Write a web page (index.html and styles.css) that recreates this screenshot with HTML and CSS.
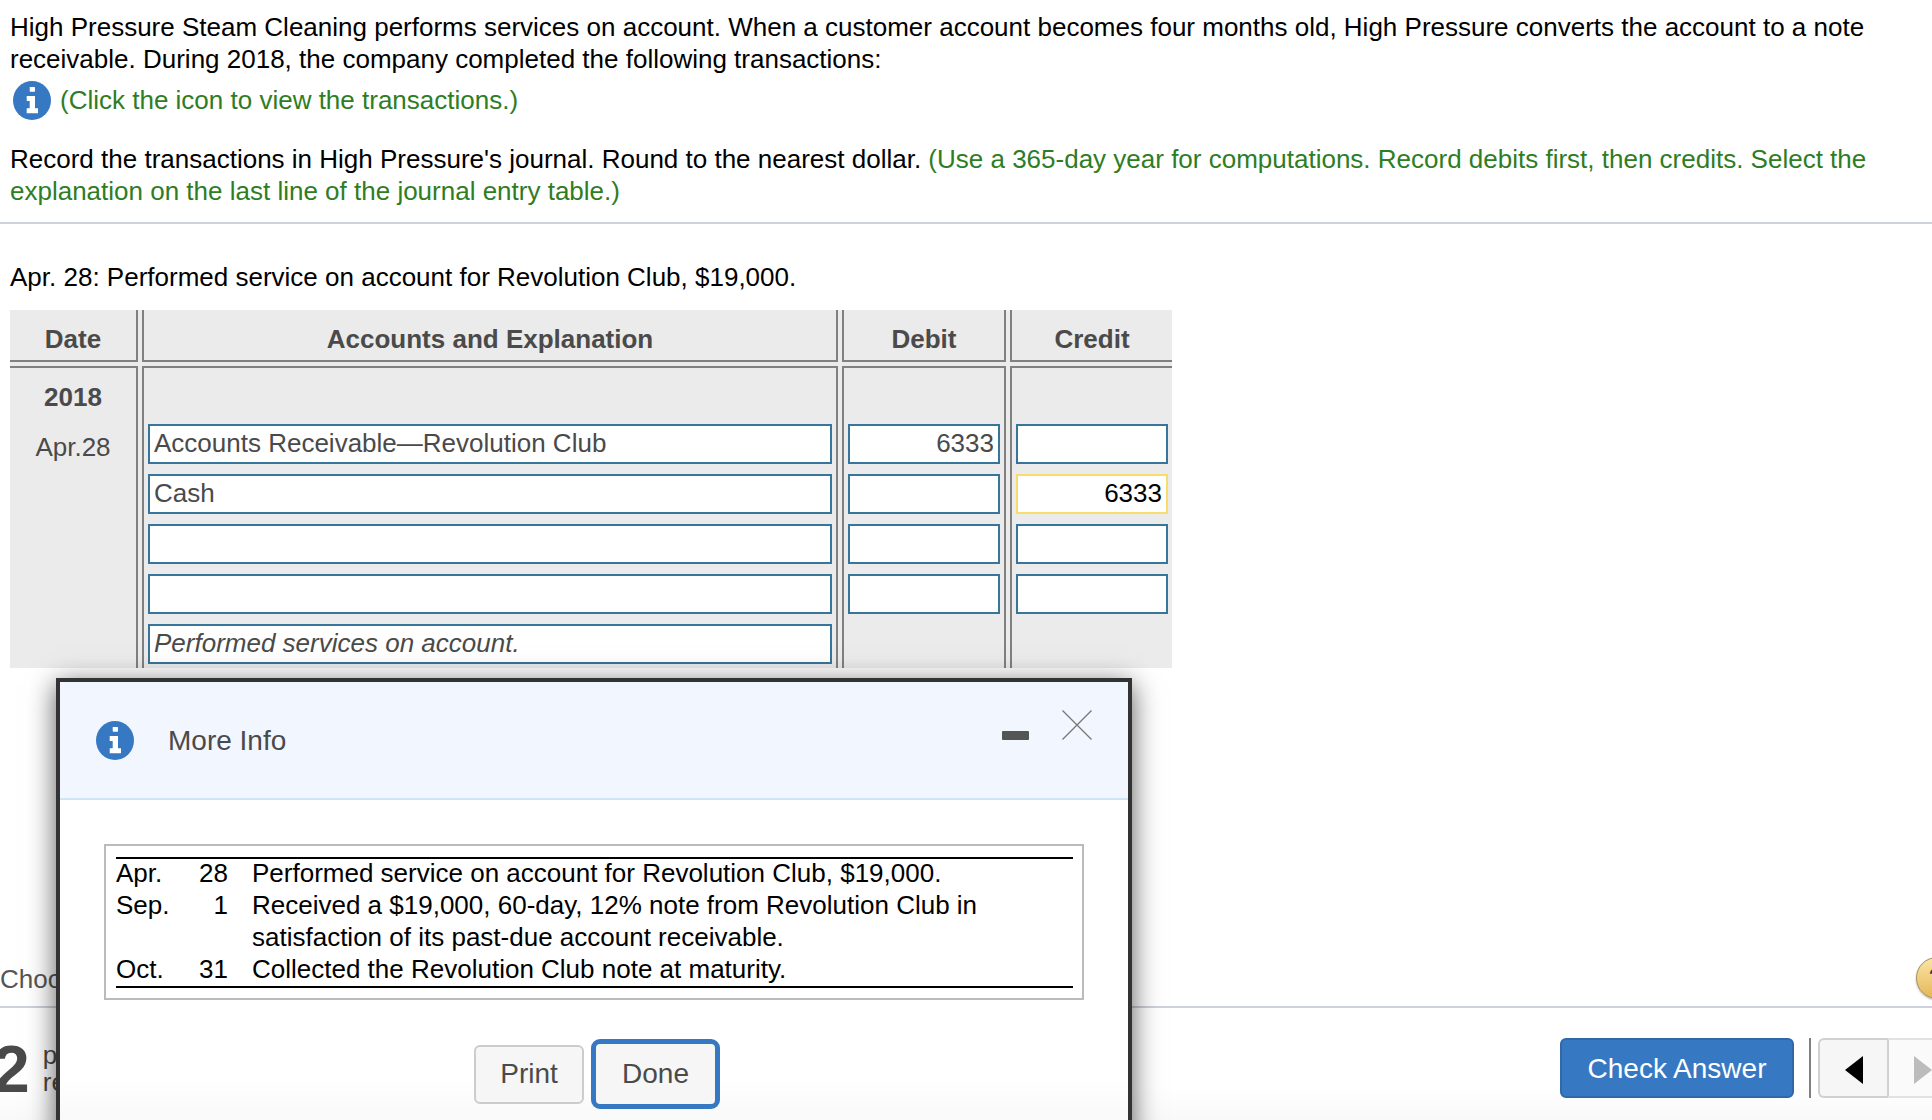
FILE: index.html
```html
<!DOCTYPE html>
<html lang="en">
<head>
<meta charset="utf-8">
<title>More Info</title>
<link rel="stylesheet" href="styles.css">
</head>
<body>
<main class="question">
  <p class="para">High Pressure Steam Cleaning performs services on account. When a customer account becomes four months old, High Pressure converts the account to a note receivable. During 2018, the company completed the following transactions:</p>
  <div class="info-line">
    <svg class="info-icon" viewBox="0 0 38 39"><ellipse cx="19" cy="19.500" rx="19" ry="19.500" fill="#3778c2"/><rect x="16.700" y="6" width="5.300" height="4.700" rx=".6" fill="#fff"/><path d="M13.700 15H22v12.200h3v5H13.700v-5h3v-7.200h-3z" fill="#fff"/></svg>
    <span class="green">(Click the icon to view the transactions.)</span>
  </div>
  <p class="para">Record the transactions in High Pressure's journal. Round to the nearest dollar. <span class="green">(Use a 365-day year for computations. Record debits first, then credits. Select the explanation on the last line of the journal entry table.)</span></p>
  <hr class="rule">
  <p class="para prompt">Apr. 28: Performed service on account for Revolution Club, $19,000.</p>
  <div class="journal">
    <div class="head c-date">Date</div>
    <div class="head c-acct">Accounts and Explanation</div>
    <div class="head c-debit">Debit</div>
    <div class="head c-credit">Credit</div>
    <div class="body c-date">
      <div class="year">2018</div>
      <div class="when">Apr.28</div>
    </div>
    <div class="body c-acct fields">
      <div class="field">Accounts Receivable—Revolution Club</div>
      <div class="field">Cash</div>
      <div class="field"></div>
      <div class="field"></div>
      <div class="field italic">Performed services on account.</div>
    </div>
    <div class="body c-debit fields">
      <div class="field num">6333</div>
      <div class="field num"></div>
      <div class="field num"></div>
      <div class="field num"></div>
    </div>
    <div class="body c-credit fields">
      <div class="field num"></div>
      <div class="field num active">6333</div>
      <div class="field num"></div>
      <div class="field num"></div>
    </div>
  </div>
</main>
<div class="choose">Choose</div>
<footer class="footer">
  <div class="points"><span class="big">2</span><span class="parts">parts<br>remaining</span></div>
  <div class="actions">
    <button class="check">Check Answer</button>
    <span class="sep"></span>
    <div class="nav">
      <button class="nav-btn"><svg class="arrow" viewBox="0 0 18 28"><path d="M18 0v28L0 14z" fill="#000"/></svg></button>
      <button class="nav-btn"><svg class="arrow" viewBox="0 0 18 28"><path d="M0 0v28l18-14z" fill="#bcbcbc"/></svg></button>
    </div>
  </div>
</footer>
<div class="help">?</div>
<section class="modal">
  <header class="modal-head">
    <svg class="info-icon" viewBox="0 0 38 39"><ellipse cx="19" cy="19.500" rx="19" ry="19.500" fill="#3778c2"/><rect x="16.700" y="6" width="5.300" height="4.700" rx=".6" fill="#fff"/><path d="M13.700 15H22v12.200h3v5H13.700v-5h3v-7.200h-3z" fill="#fff"/></svg>
    <h2 class="modal-title">More Info</h2>
    <span class="minimize"></span>
    <svg class="close" viewBox="0 0 30 30"><path d="M.5.500l29 29M29.500.500l-29 29" stroke="#777" stroke-width="1.300" fill="none"/></svg>
  </header>
  <div class="modal-body">
    <div class="frame">
      <table class="tx">
        <tr><td class="m">Apr.</td><td class="d">28</td><td>Performed service on account for Revolution Club, $19,000.</td></tr>
        <tr><td class="m">Sep.</td><td class="d">1</td><td>Received a $19,000, 60-day, 12% note from Revolution Club in<br>satisfaction of its past-due account receivable.</td></tr>
        <tr class="last"><td class="m">Oct.</td><td class="d">31</td><td>Collected the Revolution Club note at maturity.</td></tr>
      </table>
    </div>
    <div class="modal-actions">
      <button class="btn">Print</button>
      <button class="btn primary">Done</button>
    </div>
  </div>
</section>
</body>
</html>
```
FILE: styles.css
```css
* { box-sizing: border-box; }
html, body { margin: 0; height: 1120px; overflow: hidden; }
body {
  position: relative;
  width: 1932px;
  font-family: "Liberation Sans", Arial, sans-serif;
  font-size: 26px;
  line-height: 32px;
  color: #000;
  background: #fff;
  display: flex;
  flex-direction: column;
}
.question { padding: 11px 0 0; height: 963px; flex: none; }
.para { margin: 0; padding: 0 10px; }
.green { color: #2e7d24; }
.info-line { display: flex; align-items: center; gap: 9px; height: 40px; margin: 5px 0 23px; padding: 0 13px; }
.info-icon { width: 38px; height: 39px; flex: none; }
.rule { height: 2px; border: 0; margin: 15px 0 0; background: #cdd0dd; }
.prompt { margin-top: 37px; }
.journal {
  margin: 17px 0 0 10px;
  width: 1162px;
  height: 358px;
  display: grid;
  grid-template-columns: 128px 696px 164px 162px;
  grid-template-rows: 52px 302px;
  gap: 4px;
  background: #ebebeb;
  color: #4a4a4a;
}
.head { font-weight: 700; text-align: center; line-height: 58px; height: 52px; border-bottom: 2px solid #808080; }
.body { border-top: 2px solid #808080; }
.c-date { border-right: 2px solid #808080; }
.c-acct, .c-debit { border-left: 2px solid #808080; border-right: 2px solid #808080; }
.c-credit { border-left: 2px solid #808080; }
.fields { display: flex; flex-direction: column; gap: 10px; padding: 56px 4px 0; }
.field {
  height: 40px;
  border: 2px solid #38759a;
  background: #fff;
  padding: 0 4px;
  line-height: 35px;
  white-space: nowrap;
  overflow: hidden;
}
.num { text-align: right; }
.italic { font-style: italic; }
.active { border-color: #f8dc6e; color: #000; }
.year { font-weight: 700; text-align: center; margin-top: 13px; }
.when { text-align: center; margin-top: 18px; }
.choose { height: 32px; flex: none; color: #555; white-space: nowrap; }
.footer {
  flex: 1;
  margin-top: 11px;
  border-top: 2px solid #cdd0dd;
  background: linear-gradient(#fff 70%, #f9f9f9);
  display: flex;
  justify-content: space-between;
  overflow: hidden;
}
.points { display: flex; align-items: center; height: 122px; }
.big { font-size: 66px; font-weight: 700; color: #4a4a4a; margin-left: -7px; line-height: 64px; }
.parts { color: #4a4a4a; line-height: 27px; margin-left: 13px; }
.actions { display: flex; align-items: flex-start; padding-top: 30px; width: 372px; flex: none; }
.check {
  flex: none;
  width: 234px;
  height: 60px;
  border: 2px solid #3168a8;
  border-radius: 6px;
  background: #3778c2;
  color: #fff;
  font: 28px "Liberation Sans", Arial, sans-serif;
  padding: 2px 0 0;
}
.sep { width: 2px; height: 60px; background: #808080; margin: 0 7px 0 15px; flex: none; }
.nav { display: flex; flex: none; }
.nav-btn {
  flex: none;
  width: 69px;
  height: 60px;
  background: #f6f6f6;
  border: 2px solid #d0d0d0;
  border-right-width: 0;
  border-radius: 6px 0 0 6px;
  padding: 3px 0 0;
  display: flex;
  align-items: center;
  justify-content: center;
}
.nav-btn + .nav-btn { border-radius: 0; border-color: #e2e2e2; background: #fafafa; border-left: 2px solid #d0d0d0; }
.arrow { width: 18px; height: 28px; }
.help {
  position: absolute;
  left: 1916px;
  top: 957px;
  width: 42px;
  height: 42px;
  border-radius: 50%;
  background: linear-gradient(#f9e6a6, #e6b658);
  border: 1px solid #a5925a;
  box-shadow: 0 1px 2px rgba(0,0,0,.35);
  color: #3a3a3a;
  font-weight: 700;
  font-size: 28px;
  text-align: center;
  line-height: 40px;
}
.modal {
  position: absolute;
  left: 56px;
  top: 678px;
  width: 1076px;
  height: 470px;
  border: 4px solid #333;
  background: linear-gradient(#fff 86%, #f9f9f9 94%);
  box-shadow: 0 6px 26px rgba(0,0,0,.65);
}
.modal-head {
  height: 118px;
  background: #f2f6fe;
  border-bottom: 2px solid #cfe4f5;
  display: flex;
  align-items: center;
  padding-left: 36px;
  position: relative;
}
.modal-title { margin: 1px 0 0 34px; font-size: 28px; font-weight: 400; color: #4a4a4a; }
.minimize { position: absolute; left: 942px; top: 49px; width: 27px; height: 9px; background: #555; border-radius: 1px; }
.close { position: absolute; left: 1002px; top: 28px; width: 30px; height: 30px; }
.modal-body { padding: 44px 44px 0 44px; }
.frame { height: 156px; border: 2px solid #bbb; padding: 11px 9px 0 10px; }
.tx { width: 100%; border-collapse: separate; border-spacing: 0; border-top: 2px solid #000; border-bottom: 2px solid #000; }
.tx td { padding: 0; vertical-align: top; }
.tx tr:first-child td { line-height: 28px; padding-bottom: 2px; }
.tx .last td { padding-bottom: 1px; }
.tx .m { width: 67px; }
.tx .d { width: 45px; text-align: right; }
.tx td:last-child { padding-left: 24px; }
.modal-actions { display: flex; align-items: center; gap: 7px; margin: 39px 0 0 370px; }
.btn {
  flex: none;
  width: 110px;
  height: 59px;
  border: 2px solid #ccc;
  border-radius: 6px;
  background: #f6f6f6;
  color: #4a4a4a;
  font: 28px "Liberation Sans", Arial, sans-serif;
  padding: 0;
}
.btn.primary { width: 129px; height: 70px; border: 5px solid #3778c2; border-radius: 9px; }
```
